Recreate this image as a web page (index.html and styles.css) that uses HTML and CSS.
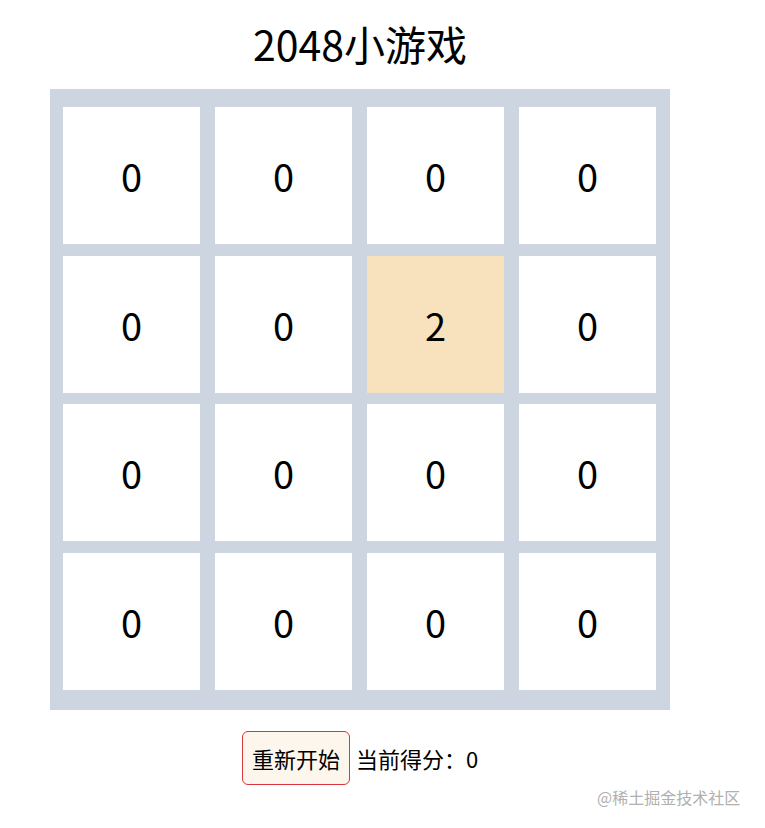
FILE: index.html
```html
<!DOCTYPE html>
<html lang="zh-CN">
<head>
  <meta charset="UTF-8">
  <title>2048小游戏</title>
  <link rel="stylesheet" href="styles.css">
</head>
<body>

  <div class="game">
    <h1 class="title">2048小游戏</h1>

    <div class="board" id="board">
      <!-- 格子由脚本渲染 -->
    </div>

    <div class="bar">
      <button class="restart" onclick="restart()">重新开始</button>
      <span class="score">当前得分：<span id="score">0</span></span>
    </div>
  </div>

  <div class="mark">@稀土掘金技术社区</div>

  <script>
    let grid = [
      [0, 0, 0, 0],
      [0, 0, 2, 0],
      [0, 0, 0, 0],
      [0, 0, 0, 0]
    ];
    let score = 0;

    function render() {
      const board = document.getElementById('board');
      board.innerHTML = '';
      grid.forEach(row => {
        row.forEach(val => {
          const cell = document.createElement('div');
          cell.className = 'cell n' + val;
          cell.textContent = val;
          board.appendChild(cell);
        });
      });
      document.getElementById('score').textContent = score;
    }

    function addRandom() {
      const empty = [];
      grid.forEach((row, i) => row.forEach((v, j) => { if (v === 0) empty.push([i, j]); }));
      if (!empty.length) return;
      const [i, j] = empty[Math.floor(Math.random() * empty.length)];
      grid[i][j] = 2;
    }

    function slide(row) {
      const nums = row.filter(v => v);
      for (let i = 0; i < nums.length - 1; i++) {
        if (nums[i] === nums[i + 1]) {
          nums[i] *= 2;
          score += nums[i];
          nums.splice(i + 1, 1);
        }
      }
      while (nums.length < 4) nums.push(0);
      return nums;
    }

    function move(dir) {
      const before = JSON.stringify(grid);
      for (let k = 0; k < 4; k++) {
        let line;
        if (dir === 'left' || dir === 'right') line = grid[k].slice();
        else line = grid.map(r => r[k]);
        if (dir === 'right' || dir === 'down') line.reverse();
        line = slide(line);
        if (dir === 'right' || dir === 'down') line.reverse();
        for (let m = 0; m < 4; m++) {
          if (dir === 'left' || dir === 'right') grid[k][m] = line[m];
          else grid[m][k] = line[m];
        }
      }
      if (JSON.stringify(grid) !== before) addRandom();
      render();
    }

    function restart() {
      grid = [[0, 0, 0, 0], [0, 0, 0, 0], [0, 0, 0, 0], [0, 0, 0, 0]];
      score = 0;
      addRandom();
      render();
    }

    document.addEventListener('keydown', e => {
      const keys = { ArrowLeft: 'left', ArrowRight: 'right', ArrowUp: 'up', ArrowDown: 'down' };
      if (keys[e.key]) move(keys[e.key]);
    });

    window.onload = render;
  </script>

</body>
</html>
```

FILE: styles.css
```css
body {
  margin: 0;
  font-family: "Noto Sans CJK SC", "Noto Sans", sans-serif;
  color: #000;
  background-color: #fff;
}

.game {
  width: 620px;
  margin-left: 50px;
  padding-top: 13px;
}

.title {
  margin: 0 0 15px;
  font-size: 41px;
  font-weight: normal;
  line-height: 61px;
  text-align: center;
}

.board {
  box-sizing: border-box;
  width: 620px;
  display: grid;
  grid-template-columns: repeat(4, 137px);
  grid-template-rows: repeat(4, 137px);
  column-gap: 15px;
  row-gap: 11.7px;
  padding: 18px 12px 20px 13px;
  background-color: #cdd5e0;
}

.cell {
  display: flex;
  align-items: center;
  justify-content: center;
  background-color: #fff;
  font-size: 38px;
}

.n2 {
  background-color: #f8e1bd;
}

.n4 {
  background-color: #f5cf95;
}

.n8 {
  background-color: #f2b179;
}

.bar {
  display: flex;
  align-items: center;
  justify-content: center;
  gap: 6px;
  margin-top: 21px;
}

.restart {
  height: 54px;
  padding: 0 9px;
  font-family: inherit;
  font-size: 22px;
  color: #000;
  background-color: #fdf6ec;
  border: 1px solid #d9363e;
  border-radius: 6px;
  cursor: pointer;
}

.score {
  font-size: 22px;
}

.mark {
  position: absolute;
  left: 597px;
  top: 785px;
  font-size: 16px;
  color: #b0b0b0;
}
```
